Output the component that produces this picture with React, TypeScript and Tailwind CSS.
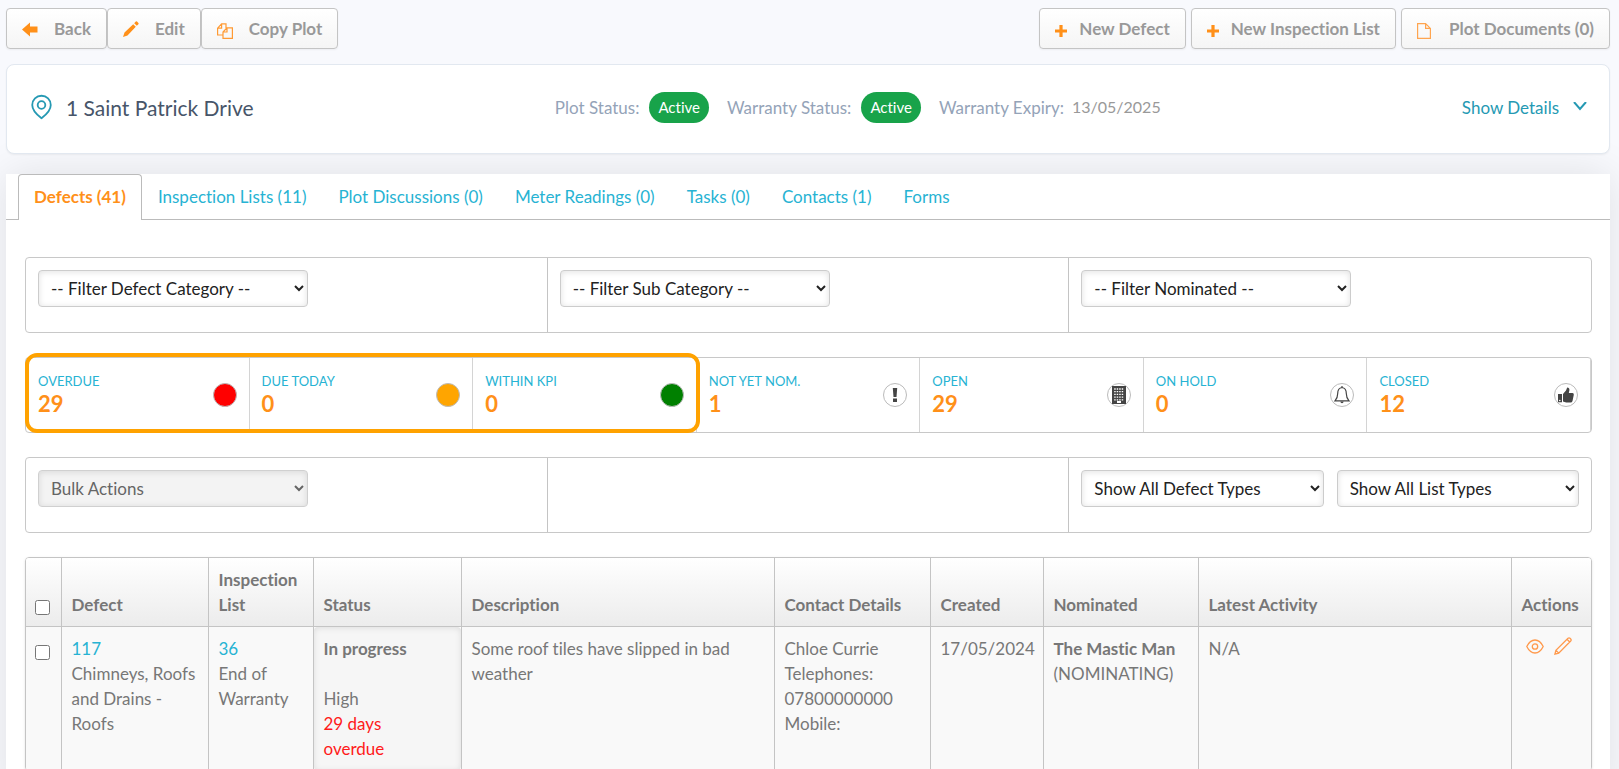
import { useState } from "react";
import type { ReactNode } from "react";

const TABS = [
  "Defects (41)",
  "Inspection Lists (11)",
  "Plot Discussions (0)",
  "Meter Readings (0)",
  "Tasks (0)",
  "Contacts (1)",
  "Forms",
];

const ArrowIcon = () => (
  <svg width="16" height="16" viewBox="0 0 16 16" fill="#ff9019">
    <path d="M0 8.500 8 1.500v4h7.500v6H8v4z" />
  </svg>
);

const PencilIcon = () => (
  <svg width="16" height="16" viewBox="0 0 16 16" fill="#ff9019">
    <path d="m0 16 1.500-4.500L10.200 3.200 12.800 5.800l-8.300 8.600zM11.200 2.200 12.800.6q.6-.5 1.200 0l1.400 1.400q.5.600 0 1.200L13.800 4.800z" />
  </svg>
);

const CopyIcon = () => (
  <svg width="16" height="20" viewBox="0 -4 16 20" fill="none" stroke="#ff9a33" strokeWidth="1.200">
    <path d="M6 12H.6V5.200L4.600.8H9v4.400M.6 5.200h4V.8M6 15.400V9l4-4.200h5.400v10.600zM6 9h4V4.800" />
  </svg>
);

const PlusIcon = () => (
  <svg width="12" height="16" viewBox="0 -4 12 16" stroke="#ff9019" strokeWidth="3.200">
    <path d="M6 0v12M0 6h12" />
  </svg>
);

const FileIcon = () => (
  <svg width="14" height="20" viewBox="0 -4 14 20" fill="none" stroke="#ffa54f" strokeWidth="1.200">
    <path d="M.6.600h8l4.800 4.800v10H.6zM8.600.600v4.800h4.800" />
  </svg>
);

const PinIcon = () => (
  <svg width="21" height="26" viewBox="0 0 22 26" fill="none" stroke="#2599b3" strokeWidth="1.900">
    <path d="M11 24.700C8 22.500 1.300 17 1.300 10.900a9.700 9.700 0 0 1 19.400 0C20.700 17 14 22.500 11 24.700z" />
    <circle cx="11" cy="10.900" r="4" />
  </svg>
);

const BuildingIcon = () => (
  <svg width="14" height="18" viewBox="0 0 14 18">
    <path fill="#444" d="M0 0h14v18H0z" />
    <path
      stroke="#fff"
      strokeWidth="1.300"
      strokeDasharray="1.500 1"
      d="M2.200 3h9.600M2.200 5.700h9.600M2.200 8.400h9.600M2.200 11.100h9.600M2.200 13.800h9.600"
    />
    <path fill="#fff" d="M5 15h4v2H5z" />
  </svg>
);

const BellIcon = () => (
  <svg width="16" height="18" viewBox="0 0 16 18" fill="none" stroke="#444" strokeWidth="1.200">
    <path d="M8 1.500C4.500 2 3.700 4.800 3.700 7.500c0 3.500-1 5.500-2.700 7.300h14c-1.700-1.800-2.700-3.800-2.700-7.300 0-2.700-.8-5.500-4.300-6zM8 0v1.800" />
    <path fill="#444" d="M6.300 15.500h3.400Q9.400 17.300 8 17.300T6.300 15.500z" stroke="none" />
  </svg>
);

const ThumbIcon = () => (
  <svg width="16" height="16" viewBox="0 0 16 16" fill="#444">
    <path d="M0 7h4v8.200H0zM5 7l3-3.400L9.200.4q2.400 0 2.200 2.800L10.800 6h3.700q1.500.200 1.300 1.700L14.500 14q-.4 1.500-2 1.600H8.200L5 14.500z" />
    <circle cx="1.800" cy="13.500" r=".8" fill="#fff" />
  </svg>
);

const BangIcon = () => (
  <svg width="6" height="14" viewBox="0 0 6 14" fill="#444">
    <path d="M.8 0h4.400l-.7 9h-3zM1 10.500h4V14H1z" />
  </svg>
);

const EyeIcon = () => (
  <svg width="18" height="15" viewBox="0 0 18 15" fill="none" stroke="#ff9a4d" strokeWidth="1.300">
    <path d="M.8 7.500Q4 1 9 1t8.200 6.500Q14 14 9 14T.8 7.500z" />
    <circle cx="9" cy="7.500" r="2.700" />
  </svg>
);

const EditIcon = () => (
  <svg width="18" height="18" viewBox="0 0 18 18" fill="none" stroke="#ff9a4d" strokeWidth="1.300">
    <path d="m.9 17.100 1-3.800L14 1.300q1.100-.9 2 0l.7.700q.9 1 0 2L4.700 16.100zM13 2.300l2.700 2.700M1.900 13.300l2.800 2.800" />
  </svg>
);

const STATS: { label: string; value: number; dot: string; icon?: ReactNode }[] = [
  { label: "OVERDUE", value: 29, dot: "bg-[#ff0000]" },
  { label: "DUE TODAY", value: 0, dot: "bg-[#ffa500]" },
  { label: "WITHIN KPI", value: 0, dot: "bg-[#008000]" },
  { label: "NOT YET NOM.", value: 1, dot: "bg-white", icon: <BangIcon /> },
  { label: "OPEN", value: 29, dot: "bg-white", icon: <BuildingIcon /> },
  { label: "ON HOLD", value: 0, dot: "bg-white", icon: <BellIcon /> },
  { label: "CLOSED", value: 12, dot: "bg-white", icon: <ThumbIcon /> },
];

const HEADINGS = [
  "Defect",
  "Inspection List",
  "Status",
  "Description",
  "Contact Details",
  "Created",
  "Nominated",
  "Latest Activity",
  "Actions",
];

function ToolButton({ icon, gap = "gap-4", children }: { icon: ReactNode; gap?: string; children: ReactNode }) {
  return (
    <button
      className={`flex h-[41px] items-center rounded-[4px] border border-[#c4c4c4] bg-gradient-to-b from-white to-[#f5f5f5] px-[15px] font-bold text-[#999] shadow-xs ${gap}`}
    >
      {icon}
      <span>{children}</span>
    </button>
  );
}

function StatusPill({ children }: { children: ReactNode }) {
  return <span className="rounded-full bg-[#18a34a] px-[9px] py-[3px] text-[15px] text-white">{children}</span>;
}

function Select({ label, className, disabled }: { label: string; className: string; disabled?: boolean }) {
  return (
    <select
      aria-label={label}
      disabled={disabled}
      className={`h-[37px] rounded-[4px] border border-[#ccc] bg-white px-2 text-[#222] shadow-[inset_0_1px_6px_rgba(0,0,0,0.12)] disabled:bg-[#f2f2f2] disabled:text-[#555] disabled:opacity-90 ${className}`}
    >
      <option>{label}</option>
    </select>
  );
}

function Panel({ children }: { children: ReactNode }) {
  return (
    <div className="grid h-[76px] grid-cols-3 divide-x divide-[#c4c4c4] rounded-[4px] border border-[#c8c8c8]">
      {children}
    </div>
  );
}

export default function App() {
  const [tab, setTab] = useState(TABS[0]);

  return (
    <div className="h-screen overflow-hidden bg-[#f8f9fd] px-1.5 pt-2 pr-[9px] font-['Lato',sans-serif] text-[17px] leading-[25px] text-[#777] [font-variant-ligatures:none]">
      {/* Toolbar */}
      <div className="flex justify-between">
        <div className="flex">
          <ToolButton icon={<ArrowIcon />}>Back</ToolButton>
          <ToolButton icon={<PencilIcon />}>Edit</ToolButton>
          <ToolButton icon={<CopyIcon />}>Copy Plot</ToolButton>
        </div>
        <div className="flex gap-[5px]">
          <ToolButton icon={<PlusIcon />} gap="gap-3">New Defect</ToolButton>
          <ToolButton icon={<PlusIcon />} gap="gap-3">New Inspection List</ToolButton>
          <ToolButton icon={<FileIcon />} gap="gap-[18px]">Plot Documents (0)</ToolButton>
        </div>
      </div>

      {/* Plot summary */}
      <div className="relative z-10 mt-[15px] flex h-[90px] items-center justify-between rounded-lg border border-[#e2e8f0] bg-white pr-[22px] pb-1 pl-6 shadow-xs">
        <div className="flex items-center gap-3.5">
          <PinIcon />
          <h1 className="text-[21px] text-[#475569]">1 Saint Patrick Drive</h1>
        </div>
        <div className="flex items-center gap-[18px] text-[#94a3b8]">
          <div className="flex items-center gap-2.5">
            Plot Status:
            <StatusPill>Active</StatusPill>
          </div>
          <div className="flex items-center gap-2.5">
            Warranty Status:
            <StatusPill>Active</StatusPill>
          </div>
          <div className="flex items-center gap-2">
            Warranty Expiry:
            <span className="text-base text-[#999]">13/05/2025</span>
          </div>
        </div>
        <button className="flex items-center gap-3.5 text-[#2599b3]">
          Show Details
          <svg width="14" height="10" viewBox="0 0 14 10" fill="none" stroke="currentColor" strokeWidth="2">
            <path d="m1 0 6 7 6-7" />
          </svg>
        </button>
      </div>

      <div className="mt-5 bg-white shadow-[0_0_40px_rgba(0,0,0,0.1)]">
        {/* Tabs */}
        <div className="flex h-[46px] border-b border-[#bbb] pl-3">
          {TABS.map((t) => (
            <button
              key={t}
              onClick={() => setTab(t)}
              className={
                t === tab
                  ? "-mb-px rounded-t-[4px] border border-b-0 border-[#bbb] bg-white px-[15px] pb-0.5 font-bold text-[#ff9019]"
                  : "px-4 text-[#27b3d3]"
              }
            >
              {t}
            </button>
          ))}
        </div>

        <div className="flex flex-col gap-6 pt-[37px] pr-[18px] pb-6 pl-[19px]">
          <Panel>
            <div className="p-3">
              <Select label="-- Filter Defect Category --" className="w-[270px]" />
            </div>
            <div className="p-3">
              <Select label="-- Filter Sub Category --" className="w-[270px]" />
            </div>
            <div className="p-3">
              <Select label="-- Filter Nominated --" className="w-[270px]" />
            </div>
          </Panel>

          {/* Counters */}
          <div className="relative grid h-[76px] grid-cols-7 divide-x divide-[#d4d4d4] rounded-[4px] border border-[#c8c8c8]">
            {STATS.map((s) => (
              <div key={s.label} className="flex items-center justify-between px-3">
                <div className="pb-1">
                  <div className="text-[13px] leading-5 text-[#27b3d3]">{s.label}</div>
                  <div className="text-[22px] font-bold text-[#ff9019]">{s.value}</div>
                </div>
                <div className={`flex size-6 items-center justify-center rounded-full border border-[#bbb] ${s.dot}`}>
                  {s.icon}
                </div>
              </div>
            ))}
            <div className="pointer-events-none absolute -top-[5px] -bottom-px -left-px w-[675px] rounded-xl border-4 border-[#ffa200]" />
          </div>

          <Panel>
            <div className="p-3">
              <Select label="Bulk Actions" className="w-[270px]" disabled />
            </div>
            <div />
            <div className="flex gap-[13px] p-3">
              <Select label="Show All Defect Types" className="min-w-0 flex-1" />
              <Select label="Show All List Types" className="min-w-0 flex-1" />
            </div>
          </Panel>

          {/* Defects */}
          <div className="overflow-hidden rounded-[4px] border border-[#c4c4c4] shadow-sm">
            <table className="w-full table-fixed text-left">
              <colgroup>
                <col className="w-[35px]" />
                <col className="w-[147px]" />
                <col className="w-[105px]" />
                <col className="w-[148px]" />
                <col />
                <col className="w-[156px]" />
                <col className="w-[113px]" />
                <col className="w-[155px]" />
                <col />
                <col className="w-20" />
              </colgroup>
              <thead>
                <tr className="divide-x divide-[#c4c4c4] border-b border-[#c4c4c4] bg-gradient-to-b from-white to-[#ececec] align-bottom">
                  <th className="pb-[11px] pl-[9px]">
                    <input type="checkbox" aria-label="Select all defects" className="block size-[15px]" />
                  </th>
                  {HEADINGS.map((h) => (
                    <th key={h} className="px-2.5 py-[9px]">
                      {h}
                    </th>
                  ))}
                </tr>
              </thead>
              <tbody>
                <tr className="divide-x divide-[#c4c4c4] bg-[#f9f9f9] align-top">
                  <td className="pt-[18px] pl-[9px]">
                    <input type="checkbox" aria-label="Select defect 117" className="block size-[15px]" />
                  </td>
                  <td className="px-2.5 py-[9px]">
                    <a href="#117" className="text-[#27b3d3]">117</a>
                    <div>Chimneys, Roofs and Drains - Roofs</div>
                  </td>
                  <td className="px-2.5 py-[9px]">
                    <a href="#36" className="text-[#27b3d3]">36</a>
                    <div>End of Warranty</div>
                  </td>
                  <td className="rounded-[4px] bg-[#f6f6f6] px-2.5 py-[9px] shadow-[inset_0_1px_6px_rgba(0,0,0,0.1)]">
                    <b>In progress</b>
                    <br />
                    <br />
                    High
                    <div className="w-20 text-[#ff1a1a]">29 days overdue</div>
                  </td>
                  <td className="px-2.5 py-[9px]">Some roof tiles have slipped in bad weather</td>
                  <td className="px-2.5 py-[9px]">
                    Chloe Currie
                    <br />
                    Telephones: 07800000000
                    <br />
                    Mobile:
                  </td>
                  <td className="px-2.5 py-[9px]">17/05/2024</td>
                  <td className="px-2.5 py-[9px]">
                    <b>The Mastic Man</b>
                    <br />
                    (NOMINATING)
                  </td>
                  <td className="px-2.5 py-[9px]">N/A</td>
                  <td className="px-3.5 py-2.5">
                    <div className="flex items-center gap-2.5">
                      <button aria-label="View defect">
                        <EyeIcon />
                      </button>
                      <button aria-label="Edit defect">
                        <EditIcon />
                      </button>
                    </div>
                  </td>
                </tr>
              </tbody>
            </table>
          </div>
        </div>
      </div>
    </div>
  );
}
